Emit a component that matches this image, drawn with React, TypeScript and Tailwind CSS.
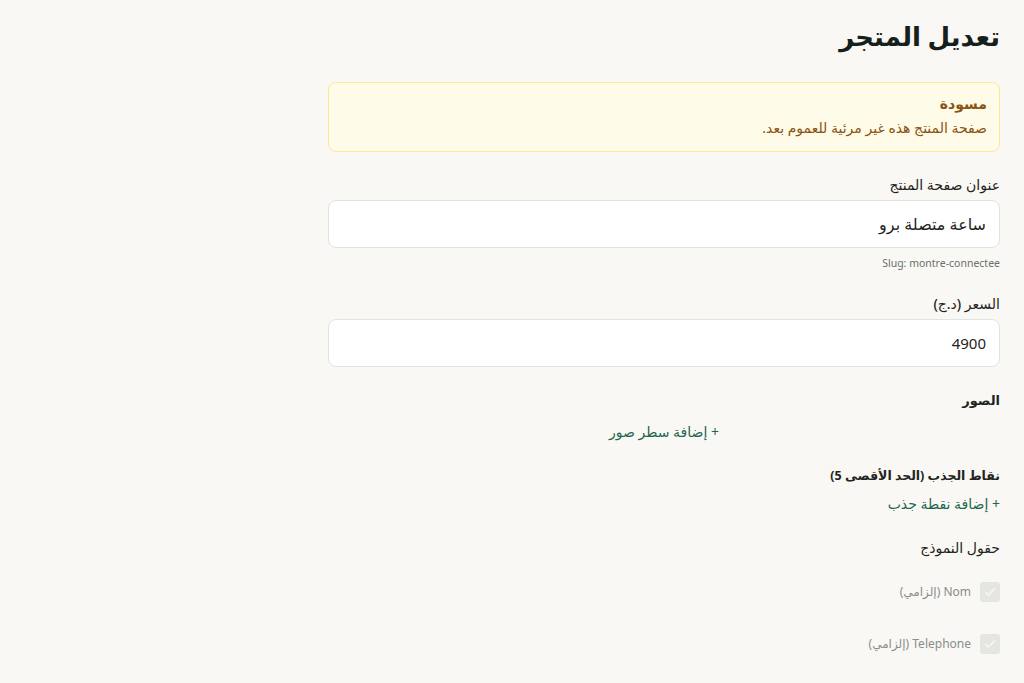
import React from "react";

const font = { fontFamily: '"Noto Sans", "DejaVu Sans", sans-serif' };

function Check() {
  return (
    <span className="flex h-5 w-5 items-center justify-center rounded-[3px] bg-[#e5e5e2]">
      <svg viewBox="0 0 16 16" className="h-3.5 w-3.5" fill="none" stroke="#f5f5f3" strokeWidth="2" strokeLinecap="round" strokeLinejoin="round">
        <path d="M3 8.5l3.2 3.2L13 4.5" />
      </svg>
    </span>
  );
}

export default function App() {
  return (
    <div dir="rtl" className="min-h-[683px] w-full bg-[#f9f8f4] text-[#1f2421]" style={font}>
      <div className="mr-6 w-[672px] pt-[14px]">
        <h1 className="text-[26px] font-bold leading-[44px] text-[#15201c]">تعديل المتجر</h1>

        <div className="mt-[24px] rounded-lg border border-[#fbe89a] bg-[#fefbe8] px-[12px] pt-[10px] pb-[12px]">
          <div className="text-[14px] font-bold leading-[22px] text-[#8a5310]">مسودة</div>
          <div className="mt-[2px] text-[14px] leading-[22px] text-[#8a5310]">صفحة المنتج هذه غير مرئية للعموم بعد.</div>
        </div>

        <div className="mt-[22px]">
          <label className="block text-[14px] font-medium leading-[22px] text-[#1f2421]">عنوان صفحة المنتج</label>
          <div className="mt-[4px] flex h-[48px] items-center rounded-lg border border-[#e2e2de] bg-white px-[13px] text-[16px] text-[#1f2421]">ساعة متصلة برو</div>
          <div className="mt-[7px] text-[10.5px] leading-[16px] text-[#6b6f6c]"><span dir="ltr">Slug: montre-connectee</span></div>
        </div>

        <div className="mt-[22px]">
          <label className="block text-[14px] font-medium leading-[22px] text-[#1f2421]">السعر (د.ج)</label>
          <div className="mt-[4px] flex h-[48px] items-center rounded-lg border border-[#e2e2de] bg-white px-[13px] text-[15px] text-[#1f2421]">4900</div>
        </div>

        <div className="mt-[22px]">
          <div className="text-[13px] font-bold leading-[22px]">الصور</div>
          <div className="mt-[10px] text-center text-[14px] leading-[22px] text-[#1e6650]">+ إضافة سطر صور</div>
        </div>

        <div className="mt-[22px]">
          <div className="text-[12.5px] font-bold leading-[22px]">نقاط الجذب (الحد الأقصى 5)</div>
          <div className="mt-[6px] text-[14px] leading-[22px] text-[#1e6650]">+ إضافة نقطة جذب</div>
        </div>

        <div className="mt-[22px]">
          <div className="text-[14px] font-medium leading-[22px]">حقول النموذج</div>
          <div className="mt-[23px] flex items-center gap-[9px] text-[12px] text-[#8a8d8a]">
            <Check />
            <span>Nom (إلزامي)</span>
          </div>
          <div className="mt-[32px] flex items-center gap-[9px] text-[12px] text-[#8a8d8a]">
            <Check />
            <span>Telephone (إلزامي)</span>
          </div>
        </div>
      </div>
    </div>
  );
}
